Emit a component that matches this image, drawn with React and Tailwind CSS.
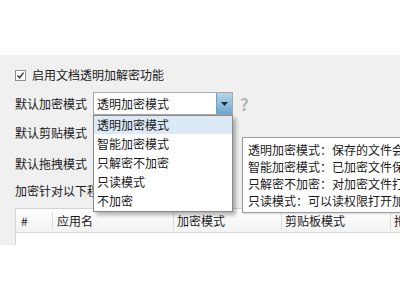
import React from 'react';

const font = { fontFamily: '"Noto Sans CJK SC", "Noto Sans", sans-serif' };

const modes = ['透明加密模式', '智能加密模式', '只解密不加密', '只读模式', '不加密'];

const tips = [
    '透明加密模式：保存的文件会被加密',
    '智能加密模式：已加密文件保存后仍加密',
    '只解密不加密：对加密文件打开时解密',
    '只读模式：可以读权限打开加密文件',
];

function App() {
    return (
        <div className="w-[400px] h-[300px] overflow-hidden bg-white text-[12px] text-[#1a1a1a]" style={font}>
            {/* top white strip */}
            <div className="h-[55px] bg-white" />

            {/* settings panel */}
            <div className="relative h-[190px] overflow-hidden bg-[#f0f0f0] pl-[15px] pt-[11px]">
                {/* enable checkbox */}
                <div className="flex h-[18px] items-center">
                    <div className="flex h-[11px] w-[11px] items-center justify-center border border-[#8f8f8f] bg-white">
                        <svg width="9" height="9" viewBox="0 0 9 9">
                            <path d="M1.5 4.5 L3.6 6.8 L7.6 1.6" stroke="#3a3a3a" strokeWidth="1.5" fill="none" />
                        </svg>
                    </div>
                    <span className="ml-[6px]">启用文档透明加解密功能</span>
                </div>

                {/* encrypt mode row with combobox */}
                <div className="mt-[8px] flex h-[23px] items-center">
                    <span className="w-[78px]">默认加密模式</span>
                    <div className="relative">
                        <div className="flex h-[23px] w-[140px] items-center border border-[#a8a8a8] bg-white">
                            <span className="flex-1 pl-[3px]">透明加密模式</span>
                            <div className="flex h-[21px] w-[16px] items-center justify-center border-l border-[#6d9ec3] bg-gradient-to-b from-[#b6d4ea] to-[#6fa6cf]">
                                <svg width="7" height="4" viewBox="0 0 7 4">
                                    <path d="M0 0 L7 0 L3.5 4 Z" fill="#1b2a38" />
                                </svg>
                            </div>
                        </div>

                        {/* open dropdown list */}
                        <div className="absolute left-0 top-[23px] z-20 w-[140px] border border-[#8a8a8a] bg-white pb-[1px] shadow-[3px_3px_4px_rgba(0,0,0,0.3)]">
                            {modes.map((m, i) => (
                                <div
                                    key={m}
                                    className={
                                        i === 0
                                            ? 'flex h-[18px] items-center bg-[#dce9f6] pl-[3px]'
                                            : 'flex h-[19px] items-center pl-[3px]'
                                    }
                                >
                                    {m}
                                </div>
                            ))}
                        </div>
                    </div>
                    <span className="ml-[7px] text-[17px] font-bold leading-none text-[#b8b8b8]">?</span>
                </div>

                <div className="mt-[6px] flex h-[23px] items-center">默认剪贴模式</div>
                <div className="mt-[8px] flex h-[23px] items-center">默认拖拽模式</div>
                <div className="mt-[6px] flex h-[20px] items-center">加密针对以下程序</div>

                {/* app table */}
                <div className="mt-[7px] w-[420px] border-l border-t border-[#d4d4d4] bg-white">
                    <div className="flex h-[24px] items-center whitespace-nowrap border-b border-[#d8d8d8] bg-gradient-to-b from-white to-[#f2f2f2]">
                        <div className="w-[37px] shrink-0 border-r border-[#dcdcdc] pl-[5px]">#</div>
                        <div className="w-[121px] shrink-0 border-r border-[#dcdcdc] pl-[4px]">应用名</div>
                        <div className="w-[108px] shrink-0 border-r border-[#dcdcdc] pl-[3px]">加密模式</div>
                        <div className="w-[109px] shrink-0 border-r border-[#dcdcdc] pl-[3px]">剪贴板模式</div>
                        <div className="shrink-0 pl-[3px]">拖拽模式</div>
                    </div>
                    <div className="h-[40px] bg-white" />
                </div>

                {/* tooltip */}
                <div className="absolute left-[242px] top-[82px] z-10 h-[76px] w-[200px] border border-[#9a9a9a] bg-white pl-[5px] pt-[3px] shadow-[1px_1px_2px_rgba(0,0,0,0.15)]">
                    {tips.map(t => (
                        <div key={t} className="h-[17px] whitespace-nowrap leading-[17px]">{t}</div>
                    ))}
                </div>
            </div>
        </div>
    );
}

export default App;
